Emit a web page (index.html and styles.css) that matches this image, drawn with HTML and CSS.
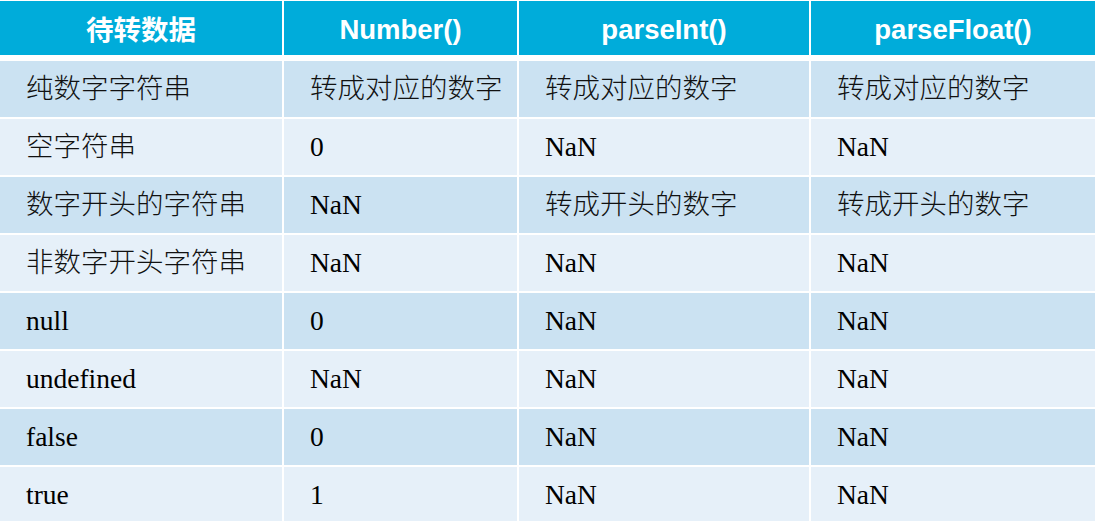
FILE: index.html
```html
<!DOCTYPE html>
<html lang="zh-CN">
<head>
<meta charset="utf-8">
<title>类型转换对照表</title>
<link rel="stylesheet" href="styles.css">
</head>
<body>
<div class="table">
  <div class="cell head zh-head">待转数据</div>
  <div class="cell head">Number()</div>
  <div class="cell head">parseInt()</div>
  <div class="cell head">parseFloat()</div>

  <div class="cell dark zh">纯数字字符串</div>
  <div class="cell dark zh">转成对应的数字</div>
  <div class="cell dark zh">转成对应的数字</div>
  <div class="cell dark zh">转成对应的数字</div>

  <div class="cell light zh">空字符串</div>
  <div class="cell light">0</div>
  <div class="cell light">NaN</div>
  <div class="cell light">NaN</div>

  <div class="cell dark zh">数字开头的字符串</div>
  <div class="cell dark">NaN</div>
  <div class="cell dark zh">转成开头的数字</div>
  <div class="cell dark zh">转成开头的数字</div>

  <div class="cell light zh">非数字开头字符串</div>
  <div class="cell light">NaN</div>
  <div class="cell light">NaN</div>
  <div class="cell light">NaN</div>

  <div class="cell dark">null</div>
  <div class="cell dark">0</div>
  <div class="cell dark">NaN</div>
  <div class="cell dark">NaN</div>

  <div class="cell light">undefined</div>
  <div class="cell light">NaN</div>
  <div class="cell light">NaN</div>
  <div class="cell light">NaN</div>

  <div class="cell dark">false</div>
  <div class="cell dark">0</div>
  <div class="cell dark">NaN</div>
  <div class="cell dark">NaN</div>

  <div class="cell light">true</div>
  <div class="cell light">1</div>
  <div class="cell light">NaN</div>
  <div class="cell light">NaN</div>
</div>
</body>
</html>
```

FILE: styles.css
```css
html, body {
  margin: 0;
  padding: 0;
  background: #ffffff;
}

body {
  width: 1098px;
  height: 521px;
  overflow: hidden;
}

.table {
  display: grid;
  grid-template-columns: 282px 233px 290px 284px;
  grid-template-rows: 58px repeat(8, 56px);
  column-gap: 2px;
  row-gap: 2px;
  margin-top: 1px;
}

.cell {
  display: flex;
  align-items: center;
  box-sizing: border-box;
  padding-left: 26px;
  font-family: "Liberation Serif", "Noto Sans CJK SC", serif;
  font-size: 27.5px;
  color: #000000;
  white-space: nowrap;
}

.zh {
  font-weight: 300;
  color: #111111;
  padding-bottom: 6px;
}

.head {
  height: 54px;
  align-self: start;
  justify-content: center;
  padding-left: 0;
  padding-top: 3px;
  background: #00acda;
  color: #ffffff;
  font-family: "Liberation Sans", "Noto Sans CJK SC", sans-serif;
  font-weight: bold;
  font-size: 27.5px;
}

.zh-head {
  padding-top: 0;
}

.dark {
  background: #cbe2f2;
}

.light {
  background: #e6f0f9;
}
```
